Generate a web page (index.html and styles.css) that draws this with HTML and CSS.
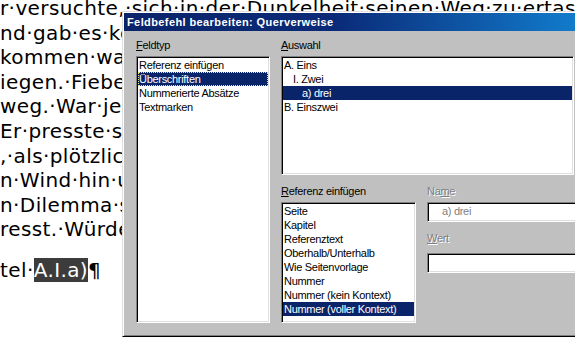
FILE: index.html
```html
<!DOCTYPE html>
<html lang="de">
<head>
<meta charset="utf-8">
<title>Feldbefehl bearbeiten</title>
<link rel="stylesheet" href="styles.css">
</head>
<body>
<div class="doc">
  <p class="line">r·versuchte,·sich·in·der·Dunkelheit·seinen·Weg·zu·ertasten.·Es·war</p>
  <p class="line">nd·gab·es·kein·Zurück·mehr.</p>
  <p class="line">kommen·war·er·nicht.</p>
  <p class="line">iegen.·Fieber·stieg·auf.</p>
  <p class="line">weg.·War·jetzt·alles·verloren?</p>
  <p class="line">Er·presste·sich·an·die·Wand.</p>
  <p class="line">,·als·plötzlich·ein·Licht·erschien.</p>
  <p class="line">n·Wind·hin·und·her.</p>
  <p class="line">n·Dilemma·steckte·er·nun.</p>
  <p class="line">resst.·Würde·er·es·schaffen?</p>
  <p class="line last">tel·<span class="hl">A.I.a)</span>¶</p>
</div>

<div class="dialog">
  <div class="titlebar">Feldbefehl bearbeiten: Querverweise</div>
  <div class="dlg-body">
    <div class="col-type">
      <div class="label"><u>F</u>eldtyp</div>
      <ul class="listbox lb-type">
        <li>Referenz einfügen</li>
        <li class="selected focused">Überschriften</li>
        <li>Nummerierte Absätze</li>
        <li>Textmarken</li>
      </ul>
    </div>
    <div class="col-right">
      <div class="label"><u>A</u>uswahl</div>
      <ul class="listbox lb-sel">
        <li class="lvl1">A. Eins</li>
        <li class="lvl2">I. Zwei</li>
        <li class="lvl3 selected">a) drei</li>
        <li class="lvl1">B. Einszwei</li>
      </ul>
      <div class="lower">
        <div class="col-ref">
          <div class="label"><u>R</u>eferenz einfügen</div>
          <ul class="listbox lb-ref">
            <li>Seite</li>
            <li>Kapitel</li>
            <li>Referenztext</li>
            <li>Oberhalb/Unterhalb</li>
            <li>Wie Seitenvorlage</li>
            <li>Nummer</li>
            <li>Nummer (kein Kontext)</li>
            <li class="selected">Nummer (voller Kontext)</li>
          </ul>
        </div>
        <div class="col-name">
          <div class="label disabled">Na<u>m</u>e</div>
          <div class="textbox tb-name"><span class="tb-text">a) drei</span></div>
          <div class="label disabled label-wert"><u>W</u>ert</div>
          <div class="textbox tb-wert"></div>
        </div>
      </div>
    </div>
  </div>
</div>
</body>
</html>
```

FILE: styles.css
```css
html, body {
  margin: 0;
  padding: 0;
  background: #fff;
  overflow: hidden;
  width: 575px;
  height: 363px;
}

body {
  position: relative;
}

.doc {
  margin-top: -4px;
  font-family: "DejaVu Sans", sans-serif;
  font-size: 20px;
  letter-spacing: 0.4px;
  line-height: 24.6px;
  color: #000;
}

.line {
  margin: 0;
  white-space: nowrap;
}

.line.last {
  margin-top: 16px;
}

.hl {
  background: #3c3c3c;
  color: #fff;
}

.dialog {
  position: absolute;
  left: 122px;
  top: 11px;
  width: 470px;
  height: 326px;
  box-sizing: border-box;
  background: #c0c0c0;
  border: 1px solid;
  border-color: #dfdfdf #000 #000 #dfdfdf;
  box-shadow: inset 1px 1px #fff, inset -1px -1px #808080;
  padding: 1px;
  font-family: "Liberation Sans", Arial, sans-serif;
  font-size: 11px;
  letter-spacing: -0.3px;
  color: #000;
}

.titlebar {
  height: 18px;
  line-height: 18px;
  padding-left: 3px;
  color: #fff;
  font-weight: bold;
  letter-spacing: 0.4px;
  white-space: nowrap;
  background: linear-gradient(to right, #0a246a 0%, #0a2a78 45%, #1280d0 100%);
}

.dlg-body {
  display: flex;
  gap: 11px;
  padding: 8px 0 0 12px;
}

.label {
  height: 13px;
  line-height: 13px;
  margin-bottom: 4px;
  white-space: nowrap;
}

.label.disabled {
  color: #808080;
  text-shadow: 1px 1px 0 #fff;
}

.listbox {
  list-style: none;
  margin: 0;
  box-sizing: border-box;
  background: #fff;
  border: 1px solid;
  border-color: #808080 #fff #fff #808080;
  box-shadow: inset 1px 1px #000, inset -1px -1px #dfdfdf;
  padding: 1px;
  overflow: hidden;
}

.listbox li {
  height: 14px;
  line-height: 14px;
  padding-left: 1px;
  white-space: nowrap;
}

.listbox li.selected {
  background: #0a246a;
  color: #fff;
}

.listbox li.focused {
  outline: 1px dotted #f4e67a;
  outline-offset: -1px;
}

.lb-type {
  width: 134px;
  height: 267px;
}

.col-right {
  width: 293px;
}

.lb-sel {
  height: 119px;
}

.lb-sel li.lvl2 {
  padding-left: 10px;
}

.lb-sel li.lvl3 {
  padding-left: 19px;
}

.lower {
  display: flex;
  gap: 11px;
  margin-top: 10px;
}

.lb-ref {
  width: 135px;
  height: 121px;
}

.col-name {
  flex: none;
  width: 170px;
}

.label-wert {
  margin-top: 10px;
  margin-bottom: 8px;
}

.textbox {
  box-sizing: border-box;
  width: 170px;
  height: 20px;
  background: #fff;
  border: 1px solid;
  border-color: #808080 #fff #fff #808080;
  box-shadow: inset 1px 1px #000, inset -1px -1px #dfdfdf;
}

.tb-text {
  display: block;
  padding-left: 14px;
  line-height: 17px;
  color: #808080;
}
```
